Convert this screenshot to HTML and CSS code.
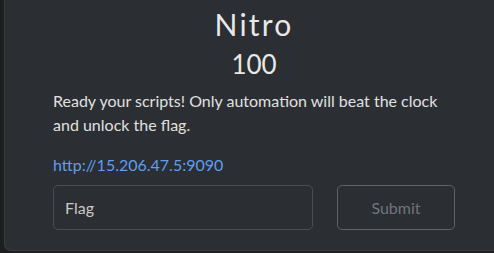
FILE: index.html
```html
<!DOCTYPE html>
<html>
<head>
<meta charset="utf-8">
<link rel="stylesheet" href="styles.css">
</head>
<body>
<div class="modal">
  <h3 class="name">Nitro</h3>
  <h4 class="value">100</h4>
  <p class="desc">Ready your scripts! Only automation will beat the clock and unlock the flag.</p>
  <p class="link"><a href="#">http://15.206.47.5:9090</a></p>
  <form class="submit-row">
    <input class="flag" type="text" placeholder="Flag">
    <button class="btn" type="button">Submit</button>
  </form>
</div>
</body>
</html>
```
FILE: styles.css
```css
html, body {
  margin: 0;
  padding: 0;
  background: #1d1f1e;
  overflow: hidden;
  height: 253px;
}
body {
  font-family: Lato, "Open Sans", sans-serif;
  color: #e6e6e6;
}
.modal {
  box-sizing: border-box;
  width: 501px;
  margin-left: 4px;
  height: 251px;
  background: #2b2e32;
  border: 1px solid #3a3d40;
  border-top: none;
  border-radius: 0 0 7px 7px;
  padding: 7px 49px 0 48px;
}
.name {
  margin: 0;
  text-align: center;
  font-size: 30px;
  font-weight: 400;
  letter-spacing: 2.2px;
  line-height: 34px;
  color: #e8e8e8;
}
.value {
  margin: 8px 0 0;
  text-align: center;
  font-size: 26px;
  font-weight: 400;
  line-height: 30px;
  color: #e8e8e8;
}
.desc {
  margin: 10px 0 0;
  font-size: 16px;
  line-height: 24px;
  color: #e0e0e0;
}
.link {
  margin: 16px 0 0;
  font-size: 16px;
  line-height: 24px;
}
.link a {
  color: #5e9ef0;
  text-decoration: none;
}
.submit-row {
  display: flex;
  gap: 24px;
  margin-top: 8px;
}
.flag {
  box-sizing: border-box;
  width: 260px;
  height: 45px;
  background: #2b2e32;
  border: 1px solid #4a4d51;
  border-radius: 5px;
  padding: 0 11px;
  font-family: Lato, sans-serif;
  font-size: 16px;
  color: #e0e0e0;
  outline: none;
}
.flag::placeholder {
  color: #c8c8c8;
}
.btn {
  box-sizing: border-box;
  width: 118px;
  height: 45px;
  background: transparent;
  border: 1px solid #5f6266;
  border-radius: 5px;
  font-family: Lato, sans-serif;
  font-size: 16px;
  color: #71757a;
}
```
